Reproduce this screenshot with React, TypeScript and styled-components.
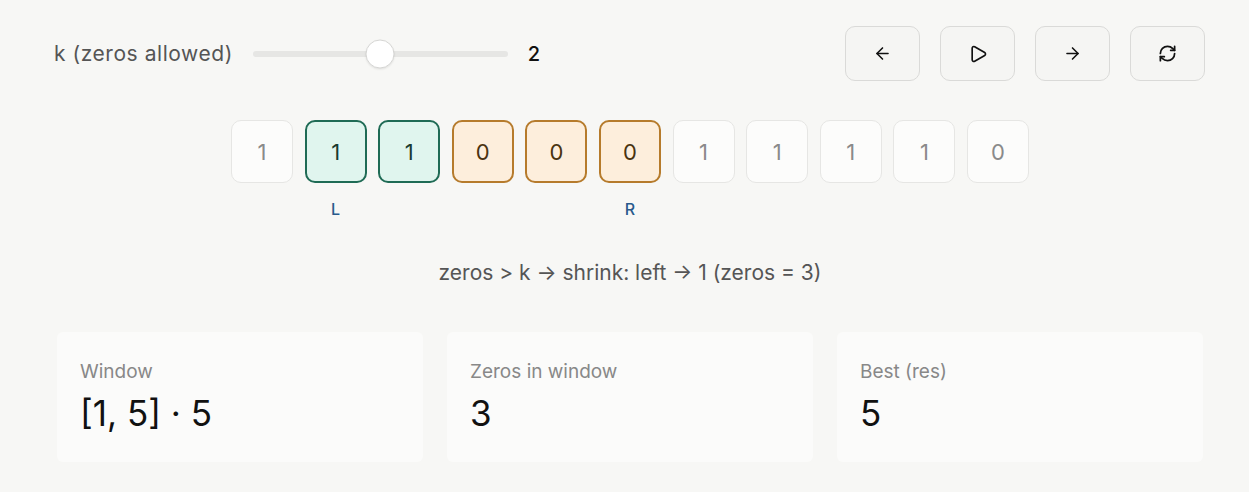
import React from "react"
import styled, { createGlobalStyle } from "styled-components"
import { ArrowLeft, ArrowRight, Play, RefreshCw } from "lucide-react"

const GlobalStyle = createGlobalStyle`
  html, body {
    margin: 0;
    padding: 0;
    background: #f7f7f5;
    font-family: Inter, "Noto Sans", sans-serif;
  }
`

const Page = styled.div`
  padding: 26px 44px 0 54px;
`

const Controls = styled.div`
  display: flex;
  align-items: center;
  justify-content: space-between;
  height: 55px;
`

const SliderGroup = styled.div`
  display: flex;
  align-items: center;
  gap: 20px;
`

const SliderLabel = styled.span`
  font-size: 21px;
  letter-spacing: 0.55px;
  color: #555;
`

const Track = styled.div`
  position: relative;
  width: 255px;
  height: 6px;
  border-radius: 3px;
  background: #e6e6e4;
`

const Thumb = styled.div`
  position: absolute;
  top: 50%;
  width: 27px;
  height: 27px;
  border-radius: 50%;
  background: #ffffff;
  border: 1px solid #d6d6d4;
  box-shadow: 0 1px 2px rgba(0, 0, 0, 0.08);
  transform: translate(-50%, -50%);
`

const SliderValue = styled.span`
  font-size: 20px;
  font-weight: 500;
  color: #111;
`

const ButtonGroup = styled.div`
  display: flex;
  gap: 20px;
`

const IconButton = styled.button`
  width: 75px;
  height: 55px;
  display: flex;
  align-items: center;
  justify-content: center;
  background: #f5f5f3;
  border: 1px solid #dadad8;
  border-radius: 10px;
  color: #111;
  cursor: pointer;
  padding: 0;
`

const Cells = styled.div`
  display: flex;
  justify-content: center;
  gap: 11.6px;
  margin-top: 39px;
  padding-left: 1px;
`

const CellColumn = styled.div`
  display: flex;
  flex-direction: column;
  align-items: center;
`

type CellKind = "idle" | "ok" | "zero"

const cellColors: Record<CellKind, { bg: string; border: string; color: string; width: number }> = {
  idle: { bg: "#fcfcfb", border: "#e6e6e4", color: "#8a8a8a", width: 1 },
  ok: { bg: "#e0f5ee", border: "#1f6b55", color: "#1a3a30", width: 2 },
  zero: { bg: "#fdeedc", border: "#b67b2c", color: "#4a3310", width: 2 },
}

const Cell = styled.div<{ $kind: CellKind }>`
  box-sizing: border-box;
  width: 62px;
  height: 63px;
  display: flex;
  align-items: center;
  justify-content: center;
  border-radius: 10px;
  font-size: 22px;
  background: ${(p) => cellColors[p.$kind].bg};
  border: ${(p) => cellColors[p.$kind].width}px solid ${(p) => cellColors[p.$kind].border};
  color: ${(p) => cellColors[p.$kind].color};
`

const Pointer = styled.div`
  height: 20px;
  margin-top: 16px;
  font-size: 16px;
  font-weight: 500;
  color: #285a8c;
`

const Status = styled.div`
  margin-top: 41px;
  padding-left: 1px;
  text-align: center;
  font-size: 21px;
  color: #555;
`

const Stats = styled.div`
  display: grid;
  grid-template-columns: repeat(3, 1fr);
  gap: 24px;
  margin-top: 47px;
  padding: 0 2px 0 3px;
`

const StatCard = styled.div`
  height: 130px;
  box-sizing: border-box;
  padding: 28px 23px;
  background: #fbfbfa;
  border-radius: 6px;
`

const StatLabel = styled.div`
  font-size: 19px;
  color: #888;
`

const StatValue = styled.div`
  margin-top: 9px;
  font-size: 35px;
  color: #111;
`

const arr = [1, 1, 1, 0, 0, 0, 1, 1, 1, 1, 0]
const left = 1
const right = 5
const k = 2
const kMax = 4

export default function App() {
  const kindOf = (i: number): CellKind => {
    if (i < left || i > right) return "idle"
    return arr[i] === 0 ? "zero" : "ok"
  }

  return (
    <>
      <GlobalStyle />
      <Page>
        <Controls>
          <SliderGroup>
            <SliderLabel>k (zeros allowed)</SliderLabel>
            <Track>
              <Thumb style={{ left: `${(k / kMax) * 100}%` }} />
            </Track>
            <SliderValue>{k}</SliderValue>
          </SliderGroup>
          <ButtonGroup>
            <IconButton aria-label="Step back">
              <ArrowLeft size={19} strokeWidth={2} />
            </IconButton>
            <IconButton aria-label="Play">
              <Play size={20} strokeWidth={2} />
            </IconButton>
            <IconButton aria-label="Step forward">
              <ArrowRight size={19} strokeWidth={2} />
            </IconButton>
            <IconButton aria-label="Reset">
              <RefreshCw size={19} strokeWidth={2.2} />
            </IconButton>
          </ButtonGroup>
        </Controls>

        <Cells>
          {arr.map((v, i) => (
            <CellColumn key={i}>
              <Cell $kind={kindOf(i)}>{v}</Cell>
              <Pointer>{i === left ? "L" : i === right ? "R" : ""}</Pointer>
            </CellColumn>
          ))}
        </Cells>

        <Status>zeros &gt; k → shrink: left → 1 (zeros = 3)</Status>

        <Stats>
          <StatCard>
            <StatLabel>Window</StatLabel>
            <StatValue>[1, 5] · 5</StatValue>
          </StatCard>
          <StatCard>
            <StatLabel>Zeros in window</StatLabel>
            <StatValue>3</StatValue>
          </StatCard>
          <StatCard>
            <StatLabel>Best (res)</StatLabel>
            <StatValue>5</StatValue>
          </StatCard>
        </Stats>
      </Page>
    </>
  )
}
